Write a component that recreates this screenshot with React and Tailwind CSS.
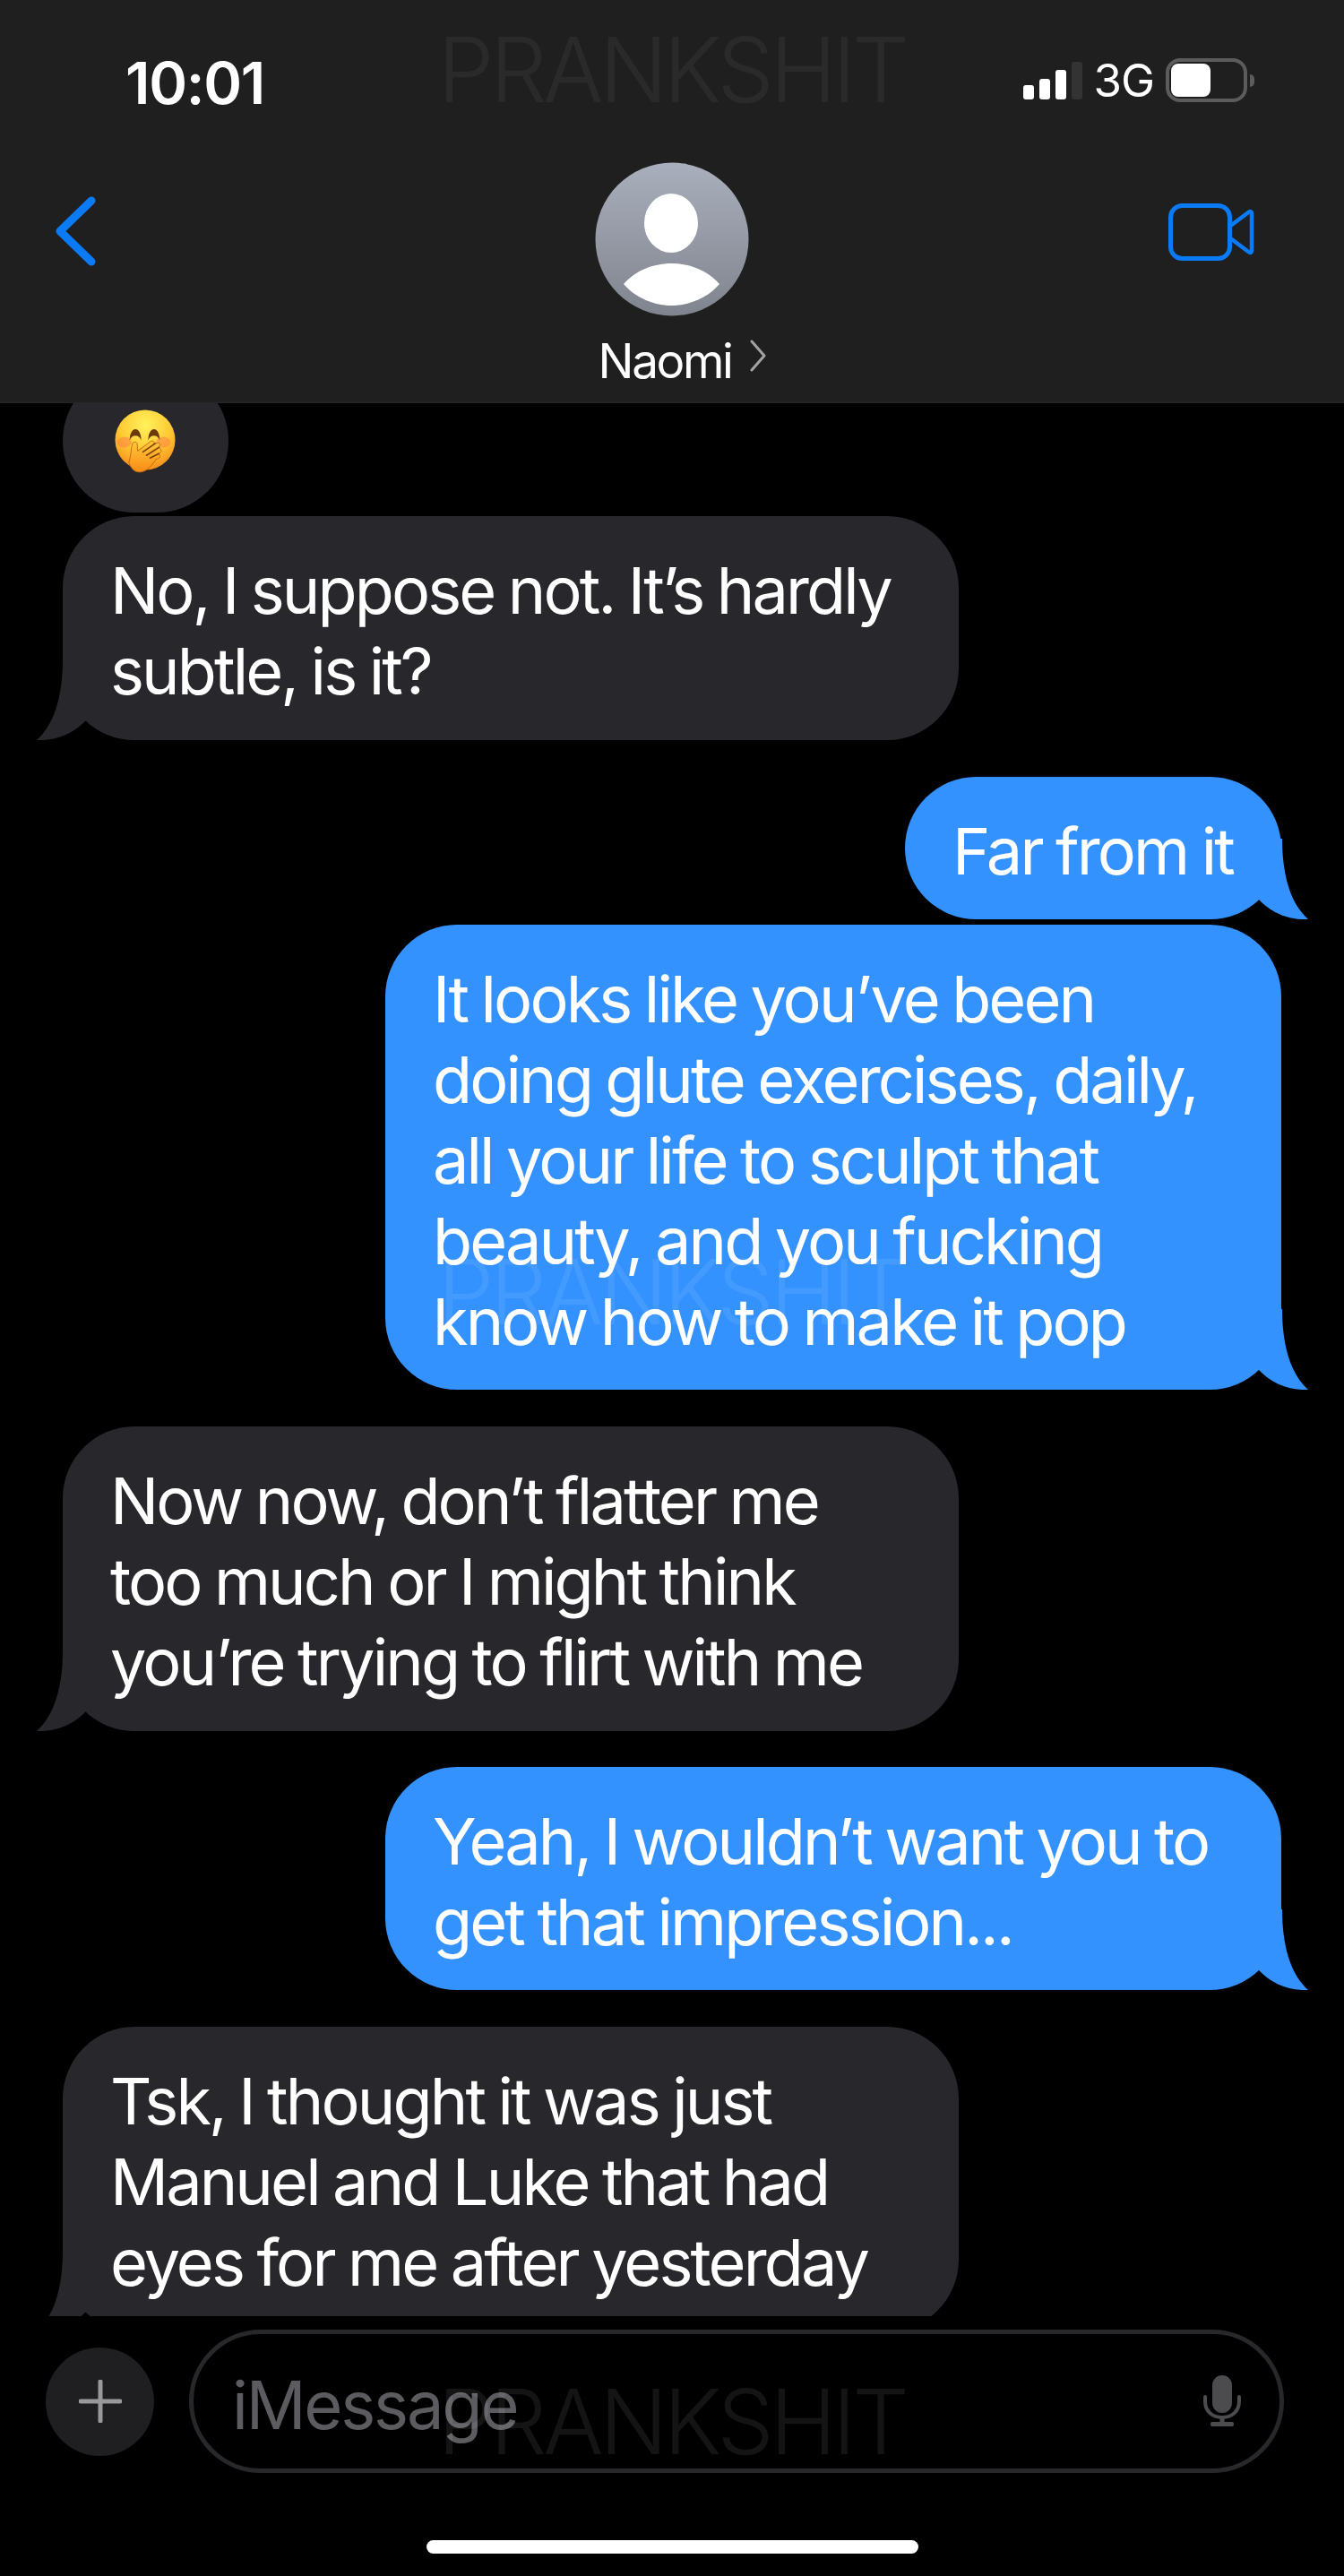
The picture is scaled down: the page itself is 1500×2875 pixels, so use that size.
import React from 'react';

const messages = [
  { id: 1, from: 'them', width: 'w-[1000px]', gap: '', lines: ['No, I suppose not. It’s hardly', 'subtle, is it?'] },
  { id: 2, from: 'me', width: 'w-[420px]', gap: 'mt-[41px]', lines: ['Far from it'] },
  {
    id: 3,
    from: 'me',
    width: 'w-[1000px]',
    gap: 'mt-[6px]',
    lines: [
      'It looks like you’ve been',
      'doing glute exercises, daily,',
      'all your life to sculpt that',
      'beauty, and you fucking',
      'know how to make it pop',
    ],
  },
  { id: 4, from: 'them', width: 'w-[1000px]', gap: 'mt-[41px]', lines: ['Now now, don’t flatter me', 'too much or I might think', 'you’re trying to flirt with me'] },
  { id: 5, from: 'me', width: 'w-[1000px]', gap: 'mt-[40px]', lines: ['Yeah, I wouldn’t want you to', 'get that impression...'] },
  { id: 6, from: 'them', width: 'w-[1000px]', gap: 'mt-[41px]', lines: ['Tsk, I thought it was just', 'Manuel and Luke that had', 'eyes for me after yesterday'] },
];

const Watermark = ({ className }) => (
  <div className={`absolute left-[482px] w-[535px] text-center text-[100px] leading-none font-light tracking-[-0.043em] pointer-events-none ${className}`}>
    PRANKSHIT
  </div>
);

// speech bubble tail, drawn for the left side and mirrored for sent messages
const Tail = ({ mine }) => (
  <svg
    viewBox="0 0 70 90"
    className={`absolute bottom-0 w-[70px] h-[90px] ${mine ? 'right-[-30px] -scale-x-100 text-[#3492ff]' : 'left-[-29px] text-[#27272c]'}`}
  >
    <path d="M29 0C29 40 20 72 0 90C22 91 41 83 56 67L70 0Z" fill="currentColor" />
  </svg>
);

const Bubble = ({ msg }) => {
  const mine = msg.from === 'me';
  return (
    <div
      className={`relative rounded-[80px] pt-[38px] pb-[32px] pl-[53px] text-white text-[72px] leading-[89.8px] tracking-[-0.04em] [word-spacing:-2px] whitespace-nowrap ${msg.width} ${
        mine ? 'self-end bg-[#3492ff]' : 'self-start bg-[#27272c]'
      }`}
    >
      {msg.lines.map((line) => (
        <div key={line}>{line}</div>
      ))}
      <Tail mine={mine} />
    </div>
  );
};

const HandOverMouth = () => (
  <svg viewBox="0 0 70 72" className="w-[69px] h-[71px]">
    <defs>
      <radialGradient id="face" cx="50%" cy="25%" r="78%">
        <stop offset="0%" stopColor="#fff25c" />
        <stop offset="55%" stopColor="#ffc933" />
        <stop offset="100%" stopColor="#f5891a" />
      </radialGradient>
      <linearGradient id="palm" x1="0" y1="0" x2="0" y2="1">
        <stop offset="0%" stopColor="#ffc83a" />
        <stop offset="100%" stopColor="#f98c14" />
      </linearGradient>
    </defs>
    <circle cx="34.5" cy="34.5" r="34" fill="url(#face)" />
    <ellipse cx="11" cy="37" rx="8" ry="6" fill="#ff7a4a" opacity="0.5" />
    <ellipse cx="55" cy="37" rx="8" ry="6" fill="#ff7a4a" opacity="0.5" />
    <path d="M17 35C17 18 30 18 30 35C28 28 19 28 17 35Z" fill="#6b3a0a" />
    <path d="M38 35C38 18 51 18 51 35C49 28 40 28 38 35Z" fill="#6b3a0a" />
    <path
      d="M16 60C19 52 18 44 20 39C21 36 25 36 25.5 39L26 47L41 36C43.5 34.5 46 37 44 39L48 38C51 37 53 40 50 42L52 45C54 47 52 49 50 50L51 52C52 54 50 56 47 56C43 62 37 71 28 71C22 71 18 66 16 60Z"
      fill="url(#palm)"
      stroke="#b35c0a"
      strokeWidth="0.8"
    />
    <path d="M32 48L46 38.5M36 52L50 43M40 55L50 50" stroke="#7a3f08" strokeWidth="1.6" strokeLinecap="round" />
  </svg>
);

const VideoIcon = () => (
  <svg viewBox="0 0 96 64" className="w-[96px] h-[64px] text-[#0a7bf5]" fill="none" stroke="currentColor" strokeWidth="5" strokeLinejoin="round">
    <rect x="2.5" y="2.5" width="66" height="59" rx="13" />
    <path d="M70 24.5L90 9.5C91.5 8.5 93 9.5 93 11V53C93 54.5 91.5 55.5 90 54.5L70 39.5" strokeWidth="4.5" />
  </svg>
);

const MicIcon = () => (
  <svg viewBox="0 0 42 58" className="w-[42px] h-[58px] text-[#4c4c4f]" fill="currentColor">
    <rect x="10" y="0" width="22" height="42" rx="11" />
    <path d="M2 24V29C2 40 10 47 21 47C32 47 40 40 40 29V24" fill="none" stroke="currentColor" strokeWidth="4" strokeLinecap="round" />
    <rect x="18.5" y="46" width="5" height="8" />
    <rect x="8" y="52" width="26" height="5" rx="2" />
  </svg>
);

const Avatar = () => (
  <svg viewBox="0 0 172 172" className="w-[172px] h-[172px]">
    <defs>
      <linearGradient id="avatar" x1="0" y1="0" x2="0" y2="1">
        <stop offset="0%" stopColor="#a9afbc" />
        <stop offset="100%" stopColor="#80848e" />
      </linearGradient>
    </defs>
    <circle cx="86" cy="86" r="85.5" fill="url(#avatar)" />
    <ellipse cx="85" cy="68" rx="30" ry="33" fill="#fff" />
    <path d="M32 136C44 122 64 113 85.5 113C107 113 127 122 139 136C127 150 107 160 85.5 160C64 160 44 150 32 136Z" fill="#fff" />
  </svg>
);

export default function App() {
  return (
    <div className="relative w-[1500px] h-[2875px] bg-black overflow-hidden flex flex-col font-['Inter',sans-serif] text-white">
      {/* navigation header */}
      <header className="h-[450px] shrink-0 bg-[#1f1f1f] border-b border-[#262626] flex flex-col">
        <div className="h-[181px] pt-[3px] pl-[140px] pr-[108px] flex items-center justify-between">
          <span className="text-[65px] font-semibold tracking-[-0.02em] leading-none">10:01</span>
          <div className="flex items-center pb-[5px]">
            <div className="flex items-end gap-[6px] h-[42px]">
              <span className="w-[12px] h-[16px] rounded-[3px] bg-white" />
              <span className="w-[12px] h-[23px] rounded-[3px] bg-white" />
              <span className="w-[12px] h-[33px] rounded-[3px] bg-white" />
              <span className="w-[12px] h-[42px] rounded-[3px] bg-[#333333]" />
            </div>
            <span className="ml-[12px] text-[51px] leading-none tracking-[-0.02em]">3G</span>
            <div className="ml-[13px] relative w-[91px] h-[49px] rounded-[16px] border-[4px] border-[#5c5c5c] p-[2px]">
              <div className="w-[44px] h-full rounded-[8px] bg-white" />
              <div className="absolute right-[-12px] top-[14px] w-[5px] h-[14px] rounded-r-full bg-[#5c5c5c]" />
            </div>
          </div>
        </div>

        <div className="grid grid-cols-[1fr_172px_1fr]">
          <div className="pl-[61px] pt-[38px]">
            <svg viewBox="0 0 46 78" className="w-[46px] h-[78px] text-[#0a7bf5]" fill="none" stroke="currentColor" strokeWidth="9" strokeLinecap="round" strokeLinejoin="round">
              <path d="M41 5L6 39L41 73" />
            </svg>
          </div>

          <Avatar />

          <div className="flex justify-end pr-[100px] pt-[46px]">
            <VideoIcon />
          </div>
        </div>

        <div className="mt-[20px] flex items-center justify-center pl-[24px] gap-[20px]">
          <span className="text-[53px] leading-[60px] tracking-[-0.045em]">Naomi</span>
          <svg viewBox="0 0 20 36" className="w-[20px] h-[36px] -mt-[12px] text-[#a3a3a3]" fill="none" stroke="currentColor" strokeWidth="3" strokeLinecap="round" strokeLinejoin="round">
            <path d="M3 2L17 18L3 34" />
          </svg>
        </div>
      </header>

      {/* conversation, scrolled so the first bubble runs under the header */}
      <main className="h-[2135px] shrink-0 overflow-hidden px-[70px] flex flex-col">
        <div className="-mt-[38px] w-[185px] h-[160px] shrink-0 rounded-[80px] bg-[#27272c] flex items-center justify-center">
          <HandOverMouth />
        </div>
        <div className="mt-[4px] flex flex-col">
          {messages.map((msg) => (
            <div key={msg.id} className={`flex flex-col ${msg.gap}`}>
              <Bubble msg={msg} />
            </div>
          ))}
        </div>
      </main>

      {/* composer */}
      <footer className="flex-1 pt-[15px]">
        <div className="flex items-center pl-[51px] gap-[39px]">
          <div className="w-[121px] h-[121px] rounded-full bg-[#1f1f21] flex items-center justify-center">
            <svg viewBox="0 0 48 48" className="w-[48px] h-[48px] text-[#99999c]" fill="none" stroke="currentColor" strokeWidth="5" strokeLinecap="round">
              <path d="M24 2V46M2 24H46" />
            </svg>
          </div>
          <div className="w-[1222px] h-[160px] rounded-[80px] border-[5px] border-[#28282a] pl-[43px] pr-[43px] flex items-center justify-between">
            <span className="pt-[8px] text-[74px] leading-none tracking-[-0.03em] text-[#5c5c60]">iMessage</span>
            <MicIcon />
          </div>
        </div>
        <div className="mx-auto mt-[75px] w-[549px] h-[15px] rounded-full bg-white" />
      </footer>

      <Watermark className="top-[28px] text-white/[0.05]" />
      <Watermark className="top-[1392px] text-white/[0.08]" />
      <Watermark className="top-[2653px] text-white/[0.08]" />
    </div>
  );
}
